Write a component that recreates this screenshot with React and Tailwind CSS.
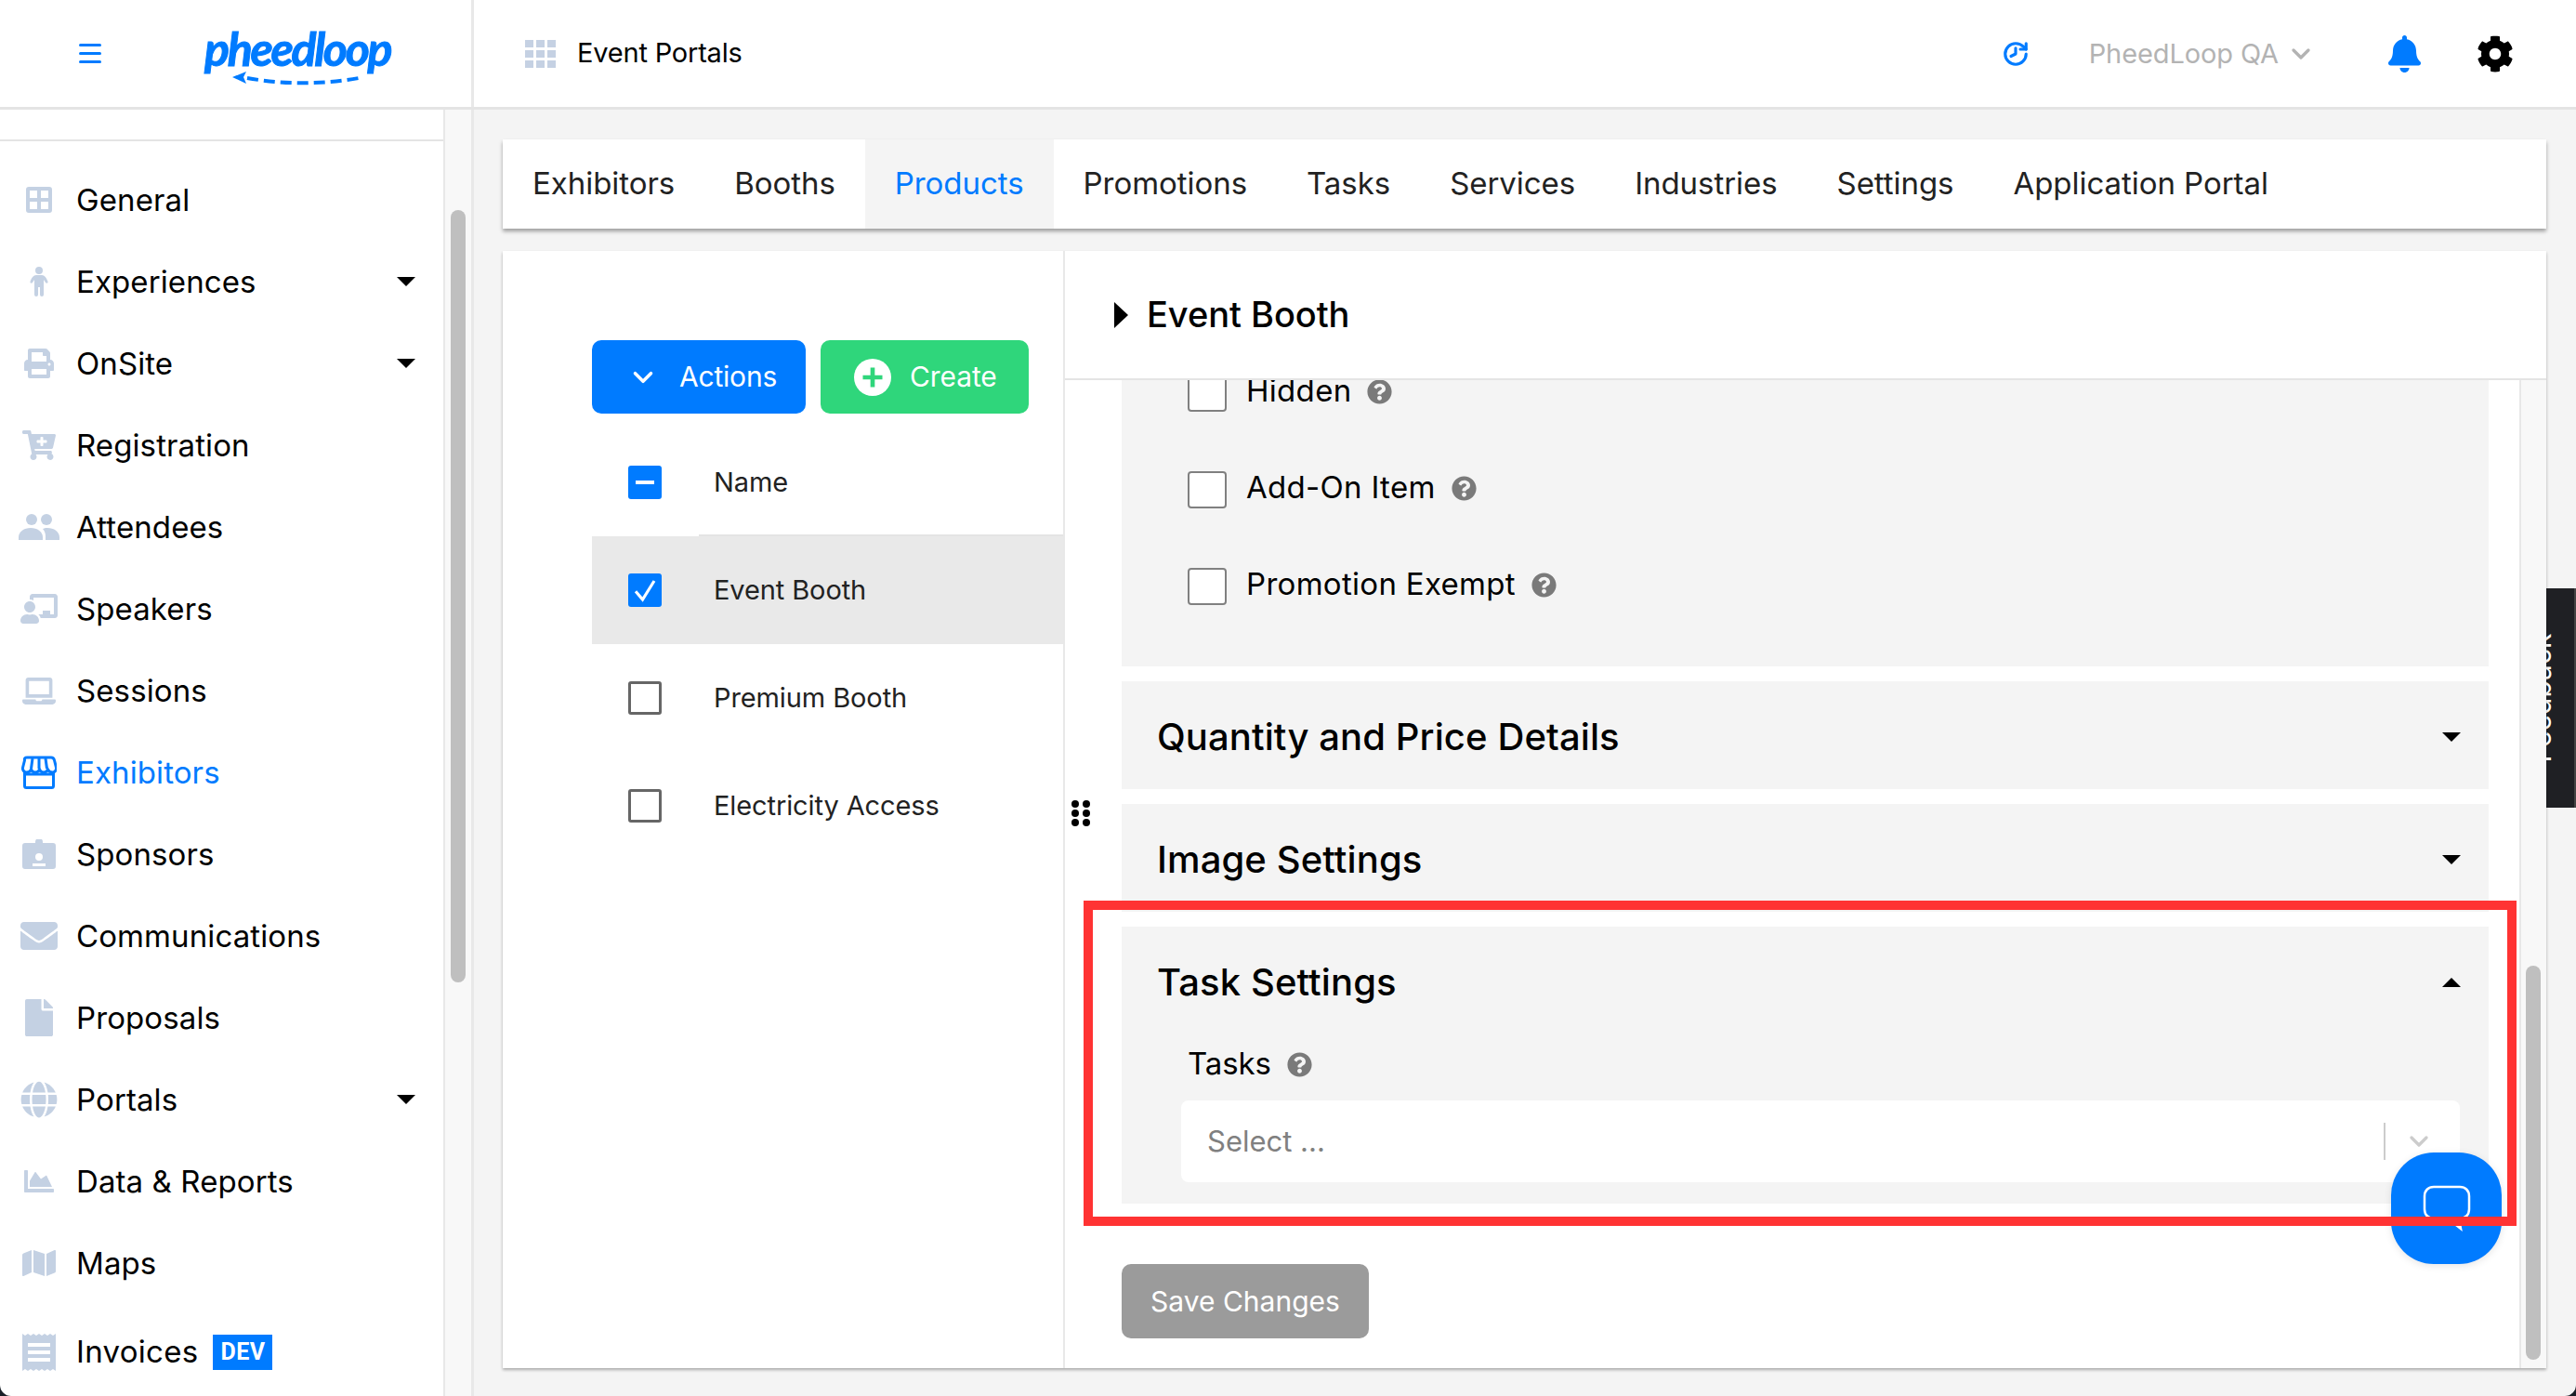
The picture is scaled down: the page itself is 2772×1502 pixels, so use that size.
import { ChevronDown, History } from 'lucide-react'
import {
  FaBell, FaCartPlus, FaChalkboardTeacher, FaChartArea, FaCog, FaEnvelope, FaFile,
  FaGlobe, FaLaptop, FaMap, FaPrint, FaQuestionCircle,
} from 'react-icons/fa'

const StoreIcon = ({ className }) => (
  <svg viewBox="0 0 38 36" className={className} fill="none" stroke="currentColor" strokeWidth="3">
    <path d="M3.500 16v16.500a2 2 0 0 0 2 2h27a2 2 0 0 0 2-2V16" />
    <path d="M6 2h26c2 0 3 1 3.500 3l2 8c.5 3-2 5-4 5-2.500 0-4-1-5-3-1 2-3 3-4.500 3s-3.500-1-4.500-3c-1 2-3 3-4.500 3s-3.500-1-4.500-3c-1 2-2.500 3-5 3-2 0-4.500-2-4-5l2-8C3 3 4 2 6 2z" fill="#fff" />
    <path d="M12 3l-1.500 11M19 3v11M26 3l1.500 11" />
    <path d="M4 20h30" />
  </svg>
)

const GridIcon = ({ className }) => (
  <svg viewBox="0 0 28 28" className={className} fill="currentColor" fillRule="evenodd">
    <path d="M3 0h22a3 3 0 0 1 3 3v22a3 3 0 0 1-3 3H3a3 3 0 0 1-3-3V3a3 3 0 0 1 3-3zM4 4v8h8V4zm12 0v8h8V4zM4 16v8h8v-8zm12 0v8h8v-8z" />
  </svg>
)

const PersonIcon = ({ className }) => (
  <svg viewBox="0 0 20 32" className={className} fill="currentColor">
    <circle cx="10" cy="4" r="4" />
    <path d="M7 9h6c3 0 5 3 6.500 7 .5 1.500-1.500 2.500-2.500 1l-2-3v16a2 2 0 0 1-4 0v-8h-2v8a2 2 0 0 1-4 0V14l-2 3c-1 1.500-3 .5-2.500-1C1.900 12 4 9 7 9z" />
  </svg>
)

const PeopleIcon = ({ className }) => (
  <svg viewBox="0 0 44 28" className={className} fill="currentColor">
    <circle cx="14" cy="6" r="6" />
    <circle cx="30" cy="6" r="6" />
    <path d="M0 28v-3c0-6 6-10 13-10s13 4 13 10v3z" />
    <path d="M29 28v-4c0-3-1-6-3-8 1-.5 3-1 5-1 7 0 13 4 13 10v3z" />
  </svg>
)

const BadgeIcon = ({ className }) => (
  <svg viewBox="0 0 36 32" className={className} fill="currentColor" fillRule="evenodd">
    <path d="M14 4V3a4 4 0 0 1 8 0v1h11a3 3 0 0 1 3 3v22a3 3 0 0 1-3 3H3a3 3 0 0 1-3-3V7a3 3 0 0 1 3-3zm4 11a4 4 0 1 0 0 8 4 4 0 0 0 0-8zm-7 11v3h14v-3z" />
  </svg>
)

const ReceiptIcon = ({ className }) => (
  <svg viewBox="0 0 36 40" className={className} fill="currentColor" fillRule="evenodd">
    <path d="M0 0l3 2 3-2 3 2 3-2 3 2 3-2 3 2 3-2 3 2 3-2 3 2 3-2v40l-3-2-3 2-3-2-3 2-3-2-3 2-3-2-3 2-3-2-3 2-3-2-3 2zM6 10v4h24v-4zm0 8v4h24v-4zm0 8v4h24v-4z" />
  </svg>
)

const navItems = [
  { label: 'General', icon: <GridIcon className="h-[28px] w-[28px]" /> },
  { label: 'Experiences', icon: <PersonIcon className="h-[32px] w-[20px]" />, caret: true },
  { label: 'OnSite', icon: <FaPrint className="h-[32px] w-[32px]" />, caret: true },
  { label: 'Registration', icon: <FaCartPlus className="h-[32px] w-[36px]" /> },
  { label: 'Attendees', icon: <PeopleIcon className="h-[28px] w-[44px]" /> },
  { label: 'Speakers', icon: <FaChalkboardTeacher className="h-[32px] w-[40px]" /> },
  { label: 'Sessions', icon: <FaLaptop className="h-[29px] w-[36px]" /> },
  { label: 'Exhibitors', icon: <StoreIcon className="h-[36px] w-[38px]" />, active: true },
  { label: 'Sponsors', icon: <BadgeIcon className="h-[32px] w-[36px]" /> },
  { label: 'Communications', icon: <FaEnvelope className="h-[40px] w-[40px]" /> },
  { label: 'Proposals', icon: <FaFile className="h-[40px] w-[32px]" /> },
  { label: 'Portals', icon: <FaGlobe className="h-[40px] w-[40px]" />, caret: true },
  { label: 'Data & Reports', icon: <FaChartArea className="h-[32px] w-[32px]" /> },
  { label: 'Maps', icon: <FaMap className="h-[32px] w-[36px]" /> },
]

const tabs = ['Exhibitors', 'Booths', 'Products', 'Promotions', 'Tasks', 'Services', 'Industries', 'Settings', 'Application Portal']

const Caret = ({ up }) => (
  <span className={up
    ? 'h-0 w-0 border-x-[10px] border-b-[10px] border-x-transparent border-b-black'
    : 'h-0 w-0 border-x-[10px] border-t-[10px] border-x-transparent border-t-black'}
  />
)

function NavItem({ item }) {
  return (
    <div className={`flex h-[88px] items-center ${item.active ? 'text-[#007bff]' : 'text-black'}`}>
      <span className={`flex w-[84px] shrink-0 items-center justify-center ${item.active ? '' : 'text-[#c4d1e3]'}`}>{item.icon}</span>
      <span className="-ml-[2px] mt-[2px] flex-1 text-[33px] tracking-[0.1px]">{item.label}</span>
      {item.caret && <span className="mr-[30px] flex"><Caret /></span>}
    </div>
  )
}

function Sidebar() {
  return (
    <aside className="flex w-[510px] shrink-0 border-r-[3px] border-[#e8e8e8] overflow-hidden">
      <div className="w-[477px] shrink-0">
        <div className="h-[34px] border-b-2 border-[#e4e4e4]" />
        <nav className="pt-[19px]">
          {navItems.map((item) => <NavItem key={item.label} item={item} />)}
          <div className="mt-[8px] flex h-[88px] items-center">
            <span className="flex w-[84px] shrink-0 items-center justify-center text-[#c4d1e3]"><ReceiptIcon className="h-[40px] w-[36px]" /></span>
            <span className="-ml-[2px] text-[33px] tracking-[0.3px]">Invoices</span>
            <span className="ml-[16px] flex h-[38px] w-[64px] items-center justify-center bg-[#007bff] font-['Roboto',sans-serif] text-[25px] font-bold tracking-[0.5px] text-white">DEV</span>
          </div>
        </nav>
      </div>
      <div className="flex-1 border-l-2 border-[#e8e8e8] bg-[#f8f8f8] pl-[6px] pt-[108px]">
        <div className="h-[831px] w-[16px] rounded-full bg-[#bfbfbf]" />
      </div>
    </aside>
  )
}

function Header() {
  return (
    <header className="flex h-[118px] shrink-0 items-center border-b-[3px] border-[#e4e4e4] bg-white">
      <div className="flex h-full w-[510px] shrink-0 items-center border-r-[3px] border-[#e8e8e8] pl-[85px]">
        <div className="flex w-[24px] flex-col gap-[6px]">
          <span className="h-[3px] rounded bg-[#007bff]" />
          <span className="h-[3px] rounded bg-[#007bff]" />
          <span className="h-[3px] rounded bg-[#007bff]" />
        </div>
        <div className="relative ml-[111px] h-[72px] w-[200px]">
          <span className="absolute left-0 top-[2px] font-['Lato',sans-serif] text-[50px] leading-[56px] font-bold italic tracking-[-2.3px] text-[#007bff] [-webkit-text-stroke:1px_#007bff]">pheedloop</span>
          <svg viewBox="0 0 200 20" className="absolute left-0 top-[54px] h-[20px] w-[200px]" fill="none" stroke="#007bff" strokeWidth="4">
            <path d="M46 8c40 7 80 7 120 0" strokeDasharray="12 6" />
            <path d="M30 7l15-6-3 6 3 7z" fill="#007bff" stroke="none" />
          </svg>
        </div>
      </div>
      <div className="ml-[55px] grid grid-cols-3 gap-[3px]">
        {Array.from({ length: 9 }).map((_, i) => <span key={i} className="h-[8px] w-[9px] bg-[#c5d1e3]" />)}
      </div>
      <span className="mb-[2px] ml-[23px] text-[29px] tracking-[-0.2px] text-black">Event Portals</span>
      <div className="ml-auto flex items-center text-[#007bff]">
        <History className="h-[30px] w-[30px] -scale-x-100" strokeWidth={2.5} />
        <span className="ml-[64px] text-[29px] tracking-[-0.1px] text-[#b3b3b3]">PheedLoop QA</span>
        <ChevronDown className="ml-[8px] h-[32px] w-[32px] text-[#b3b3b3]" strokeWidth={2.5} />
        <FaBell className="ml-[78px] h-[40px] w-[35px]" />
        <FaCog className="ml-[60px] mr-[67px] h-[40px] w-[40px] text-black" />
      </div>
    </header>
  )
}

const Check = ({ state }) => {
  if (state === 'minus') {
    return <span className="flex h-[36px] w-[36px] items-center justify-center rounded-[3px] bg-[#007bff]"><span className="h-[4px] w-[20px] bg-white" /></span>
  }
  if (state === 'checked') {
    return (
      <span className="flex h-[36px] w-[36px] items-center justify-center rounded-[3px] bg-[#007bff]">
        <svg viewBox="0 0 24 24" className="h-[30px] w-[30px]" fill="none" stroke="#fff" strokeWidth="2.5"><path d="M4 13l6 7L20 4" /></svg>
      </span>
    )
  }
  return <span className="h-[36px] w-[36px] rounded-[3px] border-[3px] border-[#666] bg-white" />
}

function LeftPane() {
  return (
    <div className="w-[605px] shrink-0 border-r-2 border-[#e8e8e8] pl-[96px] pt-[96px]">
      <div className="flex gap-[16px]">
        <button type="button" className="flex h-[79px] w-[230px] items-center rounded-[10px] bg-[#007bff] pl-[38px] text-[30px] tracking-[-0.2px] text-white">
          <ChevronDown className="h-[34px] w-[34px]" strokeWidth={2.5} />
          <span className="ml-[22px]">Actions</span>
        </button>
        <button type="button" className="flex h-[79px] w-[224px] items-center rounded-[10px] bg-[#2fd67b] pl-[36px] text-[30px] tracking-[-0.1px] text-white">
          <span className="flex h-[40px] w-[40px] items-center justify-center rounded-full bg-white text-[#2fd67b]">
            <svg viewBox="0 0 24 24" className="h-[28px] w-[28px]" fill="none" stroke="currentColor" strokeWidth="4"><path d="M12 3v18M3 12h18" /></svg>
          </span>
          <span className="ml-[20px]">Create</span>
        </button>
      </div>
      <div className="mt-[16px] flex h-[116px] items-center pl-[39px] text-[29px] tracking-[-0.1px] text-[#222]">
        <Check state="minus" />
        <span className="ml-[56px]">Name</span>
      </div>
      <div className="-mt-[2px] ml-[115px] h-[2px] bg-[#e4e4e4]" />
      <div className="flex h-[116px] items-center bg-[#e9e9e9] pl-[39px] text-[29px] tracking-[-0.1px] text-[#222]">
        <Check state="checked" />
        <span className="ml-[56px]">Event Booth</span>
      </div>
      <div className="flex h-[116px] items-center pl-[39px] text-[29px] tracking-[-0.1px] text-[#222]">
        <Check />
        <span className="ml-[56px]">Premium Booth</span>
      </div>
      <div className="flex h-[116px] items-center pl-[39px] text-[29px] tracking-[-0.1px] text-[#222]">
        <Check />
        <span className="ml-[56px]">Electricity Access</span>
      </div>
    </div>
  )
}

const Help = ({ className = 'ml-[17px]' }) => <FaQuestionCircle className={`h-[27px] w-[27px] text-[#7a7a7a] ${className}`} />

const CheckRow = ({ label }) => (
  <div className="flex h-[104px] items-center pl-[71px]">
    <span className="mt-[4px] h-[40px] w-[42px] rounded-[4px] border-2 border-[#808080] bg-white" />
    <span className="ml-[21px] text-[33px] tracking-[0.3px] text-black">{label}</span>
    <Help />
  </div>
)

const SectionHead = ({ label, up }) => (
  <div className="flex h-[116px] items-center justify-between pl-[38px] pr-[30px] pt-[3px]">
    <span className="text-[40px] font-medium tracking-[0.1px] text-black">{label}</span>
    <Caret up={up} />
  </div>
)

function RightPane() {
  return (
    <div className="flex min-w-0 flex-1 flex-col">
      <div className="flex h-[139px] shrink-0 items-center border-b-2 border-[#e4e4e4] pl-[53px]">
        <span className="h-0 w-0 border-y-[14px] border-l-[15px] border-y-transparent border-l-black" />
        <span className="ml-[20px] text-[38px] font-medium tracking-[-0.05px] text-black">Event Booth</span>
      </div>
      <div className="flex min-h-0 flex-1 overflow-hidden">
        <div className="w-[565px] min-w-0 flex-1 pl-[61px] pr-[33px]">
          <div className="-mt-[40px] bg-[#f4f4f4] pb-[36px]">
            <CheckRow label="Hidden" />
            <CheckRow label="Add-On Item" />
            <CheckRow label="Promotion Exempt" />
          </div>
          <div className="mt-[16px] bg-[#f4f4f4]"><SectionHead label="Quantity and Price Details" /></div>
          <div className="mt-[16px] bg-[#f4f4f4]"><SectionHead label="Image Settings" /></div>
          <div className="mt-[16px] bg-[#f4f4f4] pb-[23px]">
            <SectionHead label="Task Settings" up />
            <div className="mt-[4px] flex h-[56px] items-center pl-[71px]">
              <span className="text-[33px] tracking-[-0.1px] text-black">Tasks</span>
              <Help />
            </div>
            <div className="ml-[64px] mr-[31px] mt-[11px] flex h-[88px] items-center rounded-[8px] bg-white pl-[28px] pr-[28px]">
              <span className="flex-1 text-[31px] text-[#808080]">Select ...</span>
              <span className="h-[40px] w-[2px] bg-[#ccc]" />
              <ChevronDown className="ml-[20px] h-[32px] w-[32px] text-[#ccc]" strokeWidth={2.5} />
            </div>
          </div>
          <button type="button" className="mt-[65px] flex h-[80px] w-[266px] items-center justify-center rounded-[10px] bg-[#9b9b9b] text-[30px] text-white">Save Changes</button>
        </div>
        <div className="w-[29px] shrink-0 border-l-2 border-[#e8e8e8] bg-[#f8f8f8] pl-[5px] pt-[630px]">
          <div className="h-[424px] w-[16px] rounded-full bg-[#bfbfbf]" />
        </div>
      </div>
    </div>
  )
}

export default function App() {
  return (
    <div className="relative flex h-screen w-screen flex-col overflow-hidden bg-[#f4f4f4] font-['Inter',sans-serif]">
      <Header />
      <div className="flex min-h-0 flex-1">
        <div className="flex bg-white"><Sidebar /></div>
        <main className="relative z-10 flex min-w-0 flex-1 flex-col pb-[30px] pl-[31px] pr-[32px] pt-[32px]">
          <div className="flex h-[96px] shrink-0 items-stretch bg-white shadow-[0_3px_4px_rgba(0,0,0,0.35)]">
            {tabs.map((tab) => (
              <div key={tab} className={`flex items-center px-[32px] text-[33px] tracking-[-0.05px] ${tab === 'Products' ? 'bg-[#f4f4f4] text-[#007bff]' : 'text-[#222]'}`}>{tab}</div>
            ))}
          </div>
          <div className="mt-[24px] flex min-h-0 flex-1 bg-white shadow-[0_2px_3px_rgba(0,0,0,0.3)]">
            <LeftPane />
            <div className="absolute left-[643px] top-[743px] grid grid-cols-2 gap-x-[4px] gap-y-[2px]">
              {Array.from({ length: 6 }).map((_, i) => <span key={i} className="h-[8px] w-[8px] rounded-full bg-black" />)}
            </div>
            <RightPane />
          </div>
        </main>
      </div>

      {/* feedback tab, sits behind the card edge */}
      <div className="absolute right-0 top-[633px] h-[236px] w-[32px] overflow-hidden border-r-2 border-[#444] bg-[#1f2024]">
        <span className="absolute left-[-6px] top-1/2 -translate-x-1/2 -translate-y-1/2 -rotate-90 whitespace-nowrap text-[30px] text-white">Feedback</span>
      </div>

      {/* chat bubble */}
      <div className="absolute left-[2573px] top-[1240px] z-20 flex h-[120px] w-[119px] items-center justify-center rounded-[46px] bg-[#007bff] shadow-[0_2px_8px_rgba(0,0,0,0.1)]">
        <svg viewBox="0 0 52 50" className="h-[50px] w-[52px]" fill="none" stroke="#fff" strokeWidth="2.5">
          <path d="M12 2h28c6 0 10 4 10 10v14c0 6-4 10-10 10h-1l2 11-14-11H12C6 36 2 32 2 26V12C2 6 6 2 12 2z" />
        </svg>
      </div>

      {/* red annotation from the screenshot */}
      <div className="pointer-events-none absolute left-[1166px] top-[969px] z-30 h-[350px] w-[1542px] border-[10px] border-[#ff3333]" />

      {/* window corners */}
      <svg viewBox="0 0 12 12" className="absolute bottom-0 left-0 z-30 h-[12px] w-[12px]"><path d="M0 0v12h12A12 12 0 0 1 0 0z" fill="#1a2028" /></svg>
      <svg viewBox="0 0 12 12" className="absolute bottom-0 right-0 z-30 h-[12px] w-[12px]"><path d="M12 0v12H0A12 12 0 0 0 12 0z" fill="#1a2028" /></svg>
    </div>
  )
}
